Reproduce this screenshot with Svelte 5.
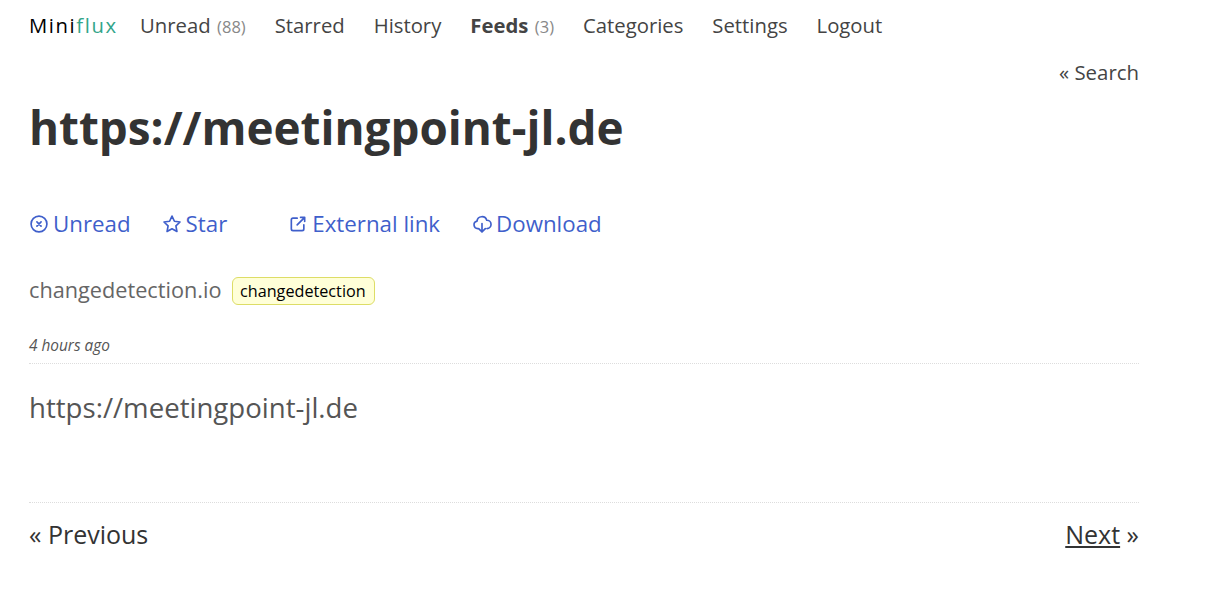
<script>
  const navItems = [
    { label: 'Unread', count: '(88)' },
    { label: 'Starred' },
    { label: 'History' },
    { label: 'Feeds', count: '(3)', active: true },
    { label: 'Categories' },
    { label: 'Settings' },
    { label: 'Logout' }
  ];
</script>

<div class="page">
  <header class="header">
    <a class="logo" href="#top">Mini<span>flux</span></a>
    <nav class="nav">
      {#each navItems as item}
        <a href="#top" class:active={item.active}>{item.label}{#if item.count}<span class="count">{item.count}</span>{/if}</a>
      {/each}
    </nav>
  </header>

  <div class="back"><a href="#top">« Search</a></div>

  <h1 class="title">https://meetingpoint-jl.de</h1>

  <ul class="actions">
    <li>
      <a href="#top">
        <svg viewBox="0 0 24 24"><circle cx="12" cy="12" r="9.5" /><path d="M9.5 9.5l5 5M14.5 9.5l-5 5" /></svg>
        Unread
      </a>
    </li>
    <li class="star">
      <a href="#top">
        <svg viewBox="0 0 24 24"><path d="M12 2.500l2.900 6.200 6.700.9-4.900 4.700 1.200 6.700-5.900-3.300L6.100 21l1.200-6.700-4.900-4.700 6.700-.9z" /></svg>
        Star
      </a>
    </li>
    <li class="external">
      <a href="#top">
        <svg viewBox="0 0 24 24"><path d="M11 5H6a2 2 0 0 0-2 2v11a2 2 0 0 0 2 2h11a2 2 0 0 0 2-2v-5M11 13l9-9M15 4h5v5" /></svg>
        External link
      </a>
    </li>
    <li>
      <a href="#top">
        <svg viewBox="0 0 24 24"><path d="M7 17.500a4.500 4.500 0 0 1-1-8.900A6 6 0 0 1 17.700 7.500 5 5 0 0 1 18 17.500M12 11.500v10M8 17.500l4 4 4-4" /></svg>
        Download
      </a>
    </li>
  </ul>

  <div class="meta">
    <a class="feed" href="#top">changedetection.io</a>
    <a class="tag" href="#top">changedetection</a>
  </div>

  <div class="date"><em>4 hours ago</em></div>

  <article class="content">https://meetingpoint-jl.de</article>

  <footer class="pager">
    <span>« Previous</span>
    <span><a href="#top">Next</a> »</span>
  </footer>
</div>

<style>
  :global(body) {
    margin: 0;
    background: #fff;
  }

  .page {
    width: 1110px;
    margin-left: 29px;
    font-family: "Open Sans", "Noto Sans", sans-serif;
    color: #333;
  }

  a {
    color: inherit;
    text-decoration: none;
  }

  .header {
    display: flex;
    align-items: center;
    height: 50px;
    font-size: 20.3px;
  }

  .logo {
    color: #000;
    width: 111px;
    letter-spacing: 1.6px;
  }

  .logo span {
    color: #33a58a;
  }

  .nav {
    display: flex;
    gap: 29px;
    color: #444;
  }

  .nav .active {
    font-weight: 700;
  }

  .count {
    margin-left: 6.5px;
    font-size: 16.5px;
    font-weight: 400;
    color: #888;
  }

  .back {
    display: flex;
    justify-content: flex-end;
    height: 44px;
    align-items: center;
    font-size: 20.4px;
    color: #444;
  }

  .title {
    margin: 3px 0 0;
    font-size: 45.8px;
    line-height: 60px;
    font-weight: 700;
    color: #333;
  }

  .actions {
    display: flex;
    gap: 32px;
    list-style: none;
    margin: 52px 0 0;
    padding: 0;
    font-size: 22.3px;
    line-height: 30px;
    color: #3f5fcb;
  }

  .actions .star {
    margin-left: -1px;
  }

  .actions .external {
    margin-left: 29px;
  }

  .actions a {
    display: flex;
    align-items: center;
    gap: 4px;
  }

  .actions svg {
    width: 20px;
    height: 20px;
    fill: none;
    stroke: currentColor;
    stroke-width: 2;
    stroke-linecap: round;
    stroke-linejoin: round;
  }

  .meta {
    display: flex;
    align-items: center;
    gap: 10px;
    margin-top: 38px;
    font-size: 21.7px;
    color: #666;
  }

  .feed {
    line-height: 24px;
    margin-bottom: 2px;
  }

  .tag {
    font-size: 16.2px;
    line-height: 26px;
    padding: 0 8px 0 7.5px;
    color: #000;
    background: #ffffd8;
    border: 1px solid #dddd66;
    border-radius: 6px;
  }

  .date {
    margin-top: 30px;
    padding-bottom: 6px;
    font-size: 15.4px;
    line-height: 22px;
    color: #555;
    border-bottom: 1px dotted #ddd;
  }

  .content {
    margin-top: 23px;
    height: 115px;
    font-size: 27.6px;
    line-height: 40px;
    color: #555;
  }

  .pager {
    display: flex;
    justify-content: space-between;
    padding-top: 15px;
    border-top: 1px dotted #ddd;
    font-size: 25px;
    line-height: 32px;
    color: #333;
  }

  .pager a {
    text-decoration: underline;
  }
</style>
